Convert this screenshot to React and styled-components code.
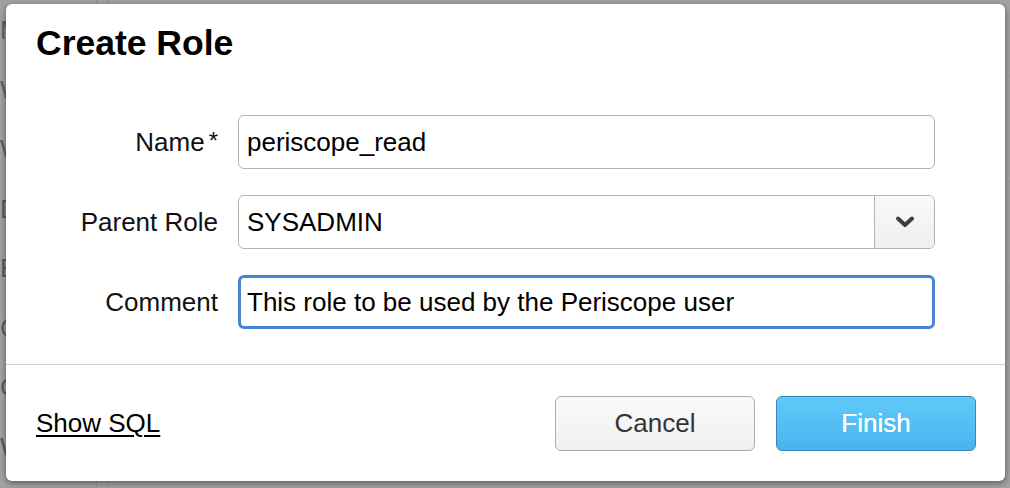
import React from "react";
import styled, { createGlobalStyle } from "styled-components";

const GlobalStyle = createGlobalStyle`
    body{
        margin: 0;
        font-family: "Liberation Sans", Arial, sans-serif;
        background: #a2a2a2;
    }
`;

const sidebarLetters = ["M", "W", "W", "D", "E", "C", "C", "W"];

const App = () => {
    return (
        <Screen>
            <GlobalStyle />
            {/* dimmed app behind the modal */}
            <Backdrop>
                <Sidebar>
                    {sidebarLetters.map((letter, i) => (
                        <SideRow key={i}>{letter}</SideRow>
                    ))}
                </Sidebar>
                <Divider />
                <Divider />
                <Main>
                    <MainRow />
                    <MainRow />
                    <MainRow />
                </Main>
            </Backdrop>

            <Dialog>
                <Header>
                    <Title>Create Role</Title>
                </Header>
                <Form>
                    <Label>
                        Name<Required>*</Required>
                    </Label>
                    <Input defaultValue="periscope_read" />

                    <Label>Parent Role</Label>
                    <Select>
                        <SelectValue>SYSADMIN</SelectValue>
                        <SelectButton>
                            <svg width="22" height="14" viewBox="0 0 22 14">
                                <path d="M4 3.5 L11 10 L18 3.5" fill="none" stroke="#3f3f3f" strokeWidth="4" strokeLinecap="round" strokeLinejoin="round" />
                            </svg>
                        </SelectButton>
                    </Select>

                    <Label>Comment</Label>
                    <Input focused defaultValue="This role to be used by the Periscope user" />
                </Form>
                <Footer>
                    <ShowSql href="#">Show SQL</ShowSql>
                    <Buttons>
                        <Button>Cancel</Button>
                        <Button primary>Finish</Button>
                    </Buttons>
                </Footer>
            </Dialog>
        </Screen>
    );
};

const Screen = styled.div`
    position: relative;
    width: 1010px;
    height: 488px;
    overflow: hidden;
    background: #a2a2a2;
`;

const Backdrop = styled.div`
    display: flex;
    height: 100%;
`;

const Sidebar = styled.div`
    width: 96px;
    padding-top: 12px;
    display: flex;
    flex-direction: column;
`;

const SideRow = styled.div`
    height: 62px;
    line-height: 36px;
    font-size: 26px;
    color: #5e5e5e;
    border-bottom: 1px solid #9c9c9c;
    box-sizing: border-box;
`;

const Divider = styled.div`
    width: 10px;
    border-left: 1px solid #929292;
`;

const Main = styled.div`
    flex: 1;
    display: flex;
    flex-direction: column;
    padding-top: 76px;
`;

const MainRow = styled.div`
    height: 104px;
    border-top: 1px solid #989898;
`;

const Dialog = styled.div`
    position: absolute;
    left: 6px;
    top: 4px;
    width: 999px;
    height: 477px;
    background: #fff;
    border-radius: 6px;
    box-shadow: 0 2px 6px rgba(0, 0, 0, 0.45);
    display: flex;
    flex-direction: column;
    box-sizing: border-box;
`;

const Header = styled.div`
    padding: 19px 30px 0;
`;

const Title = styled.h1`
    margin: 0;
    font-size: 35.5px;
    line-height: 40px;
    font-weight: bold;
    color: #000;
`;

const Form = styled.div`
    margin-top: 52px;
    display: grid;
    grid-template-columns: 212px 1fr;
    column-gap: 20px;
    row-gap: 26px;
    padding: 0 70px 35px 0;
    border-bottom: 1.5px solid #cfcfcf;
`;

const Label = styled.label`
    align-self: center;
    text-align: right;
    font-size: 26px;
    color: #111;
`;

const Required = styled.span`
    margin-left: 4px;
    font-size: 24px;
    position: relative;
    top: -2px;
`;

const Input = styled.input`
    height: 54px;
    box-sizing: border-box;
    width: 100%;
    font-family: "Liberation Sans", Arial, sans-serif;
    font-size: 26px;
    color: #000;
    border-radius: 6px;
    outline: none;
    background: #fff;
    border: ${(p) => (p.focused ? "3.5px solid #4a83d0" : "1.5px solid #b3b3b3")};
    padding: 0 8px 0 ${(p) => (p.focused ? "6px" : "8px")};
`;

const Select = styled.div`
    height: 54px;
    box-sizing: border-box;
    display: flex;
    border: 1.5px solid #b3b3b3;
    border-radius: 6px;
    overflow: hidden;
`;

const SelectValue = styled.div`
    flex: 1;
    display: flex;
    align-items: center;
    padding-left: 8px;
    font-size: 26px;
    color: #000;
`;

const SelectButton = styled.div`
    width: 59px;
    display: flex;
    align-items: center;
    justify-content: center;
    border-left: 1.5px solid #b3b3b3;
    background: linear-gradient(#f9f9f9, #efefef);
`;

const Footer = styled.div`
    flex: 1;
    display: flex;
    align-items: center;
    justify-content: space-between;
    padding: 0 29px 0 30px;
`;

const ShowSql = styled.a`
    font-size: 26px;
    color: #000;
    text-decoration: underline;
    text-underline-offset: 3px;
    text-decoration-thickness: 2px;
`;

const Buttons = styled.div`
    display: flex;
    gap: 21px;
`;

const Button = styled.button`
    width: 200px;
    height: 55px;
    border-radius: 6px;
    font-family: "Liberation Sans", Arial, sans-serif;
    font-size: 26px;
    cursor: pointer;
    color: ${(p) => (p.primary ? "#fff" : "#333")};
    text-shadow: ${(p) => (p.primary ? "0 0 0.6px #fff" : "none")};
    background: ${(p) =>
        p.primary
            ? "linear-gradient(#5fcaf9, #4ab3ee)"
            : "linear-gradient(#fafafa, #f0f0f0)"};
    border: 1.5px solid ${(p) => (p.primary ? "#3a86b8" : "#adadad")};
`;

export default App;
